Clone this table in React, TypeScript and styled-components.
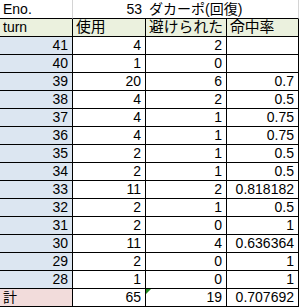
import React from 'react';
import styled, { createGlobalStyle } from 'styled-components';

const GlobalStyle = createGlobalStyle`
  html, body {
    margin: 0;
    padding: 0;
    background: #fff;
  }
  body {
    font-family: "Liberation Sans", "Noto Sans CJK JP", sans-serif;
    font-size: 14px;
    color: #000;
  }
`;

const fills = {
  none: '#ffffff',
  head: '#ebf1de',
  turn: '#dce6f1',
  total: '#f2dcdb',
};

type Fill = keyof typeof fills;

const Sheet = styled.div`
  display: grid;
  grid-template-columns: 73px 73px 81px 72px;
  grid-template-rows: 19px repeat(16, 18px);
  width: 299px;
`;

const Cell = styled.div<{
  $fill?: Fill;
  $right?: boolean;
  $edge?: 'black' | 'gray' | 'none';
  $span?: number;
  $big?: boolean;
}>`
  box-sizing: border-box;
  display: flex;
  align-items: flex-end;
  justify-content: ${(p) => (p.$right ? 'flex-end' : 'flex-start')};
  padding: 0 ${(p) => (p.$right ? '4px' : '0')} 1px ${(p) => (p.$right ? '0' : '3px')};
  background: ${(p) => fills[p.$fill ?? 'none']};
  border-bottom: 1px solid #000;
  border-right: ${(p) =>
    p.$edge === 'none' ? '0' : `1px solid ${p.$edge === 'gray' ? '#d4d4d4' : '#000'}`};
  ${(p) => (p.$span ? `grid-column: span ${p.$span};` : '')}
  font-size: ${(p) => (p.$big ? '14.8px' : '14px')};
  white-space: nowrap;
  line-height: 16px;
  position: relative;
`;

// Excel の緑三角（エラーインジケータ）
const Marker = styled.span`
  position: absolute;
  left: 0;
  top: 0;
  width: 0;
  height: 0;
  border-top: 5px solid #1e8a1e;
  border-right: 5px solid transparent;
`;

const rows: [number, number, number, string][] = [
  [41, 4, 2, ''],
  [40, 1, 0, ''],
  [39, 20, 6, '0.7'],
  [38, 4, 2, '0.5'],
  [37, 4, 1, '0.75'],
  [36, 4, 1, '0.75'],
  [35, 2, 1, '0.5'],
  [34, 2, 1, '0.5'],
  [33, 11, 2, '0.818182'],
  [32, 2, 1, '0.5'],
  [31, 2, 0, '1'],
  [30, 11, 4, '0.636364'],
  [29, 2, 0, '1'],
  [28, 1, 0, '1'],
];

const App: React.FC = () => (
  <>
    <GlobalStyle />
    <Sheet>
      {/* タイトル行 */}
      <Cell $edge="gray">Eno.</Cell>
      <Cell $right $edge="none">53</Cell>
      <Cell $span={2} $edge="gray">ダカーポ(回復)</Cell>

      {/* 見出し */}
      <Cell $fill="head">turn</Cell>
      <Cell $fill="head" $big>使用</Cell>
      <Cell $fill="head" $big>避けられた</Cell>
      <Cell $fill="head" $big>命中率</Cell>

      {rows.map(([turn, used, dodged, rate]) => (
        <React.Fragment key={turn}>
          <Cell $fill="turn" $right>{turn}</Cell>
          <Cell $right>{used}</Cell>
          <Cell $right>{dodged}</Cell>
          <Cell $right>{rate}</Cell>
        </React.Fragment>
      ))}

      {/* 合計 */}
      <Cell $fill="total">計</Cell>
      <Cell $right>65</Cell>
      <Cell $right>
        <Marker />
        19
      </Cell>
      <Cell $right>0.707692</Cell>
    </Sheet>
  </>
);

export default App;
